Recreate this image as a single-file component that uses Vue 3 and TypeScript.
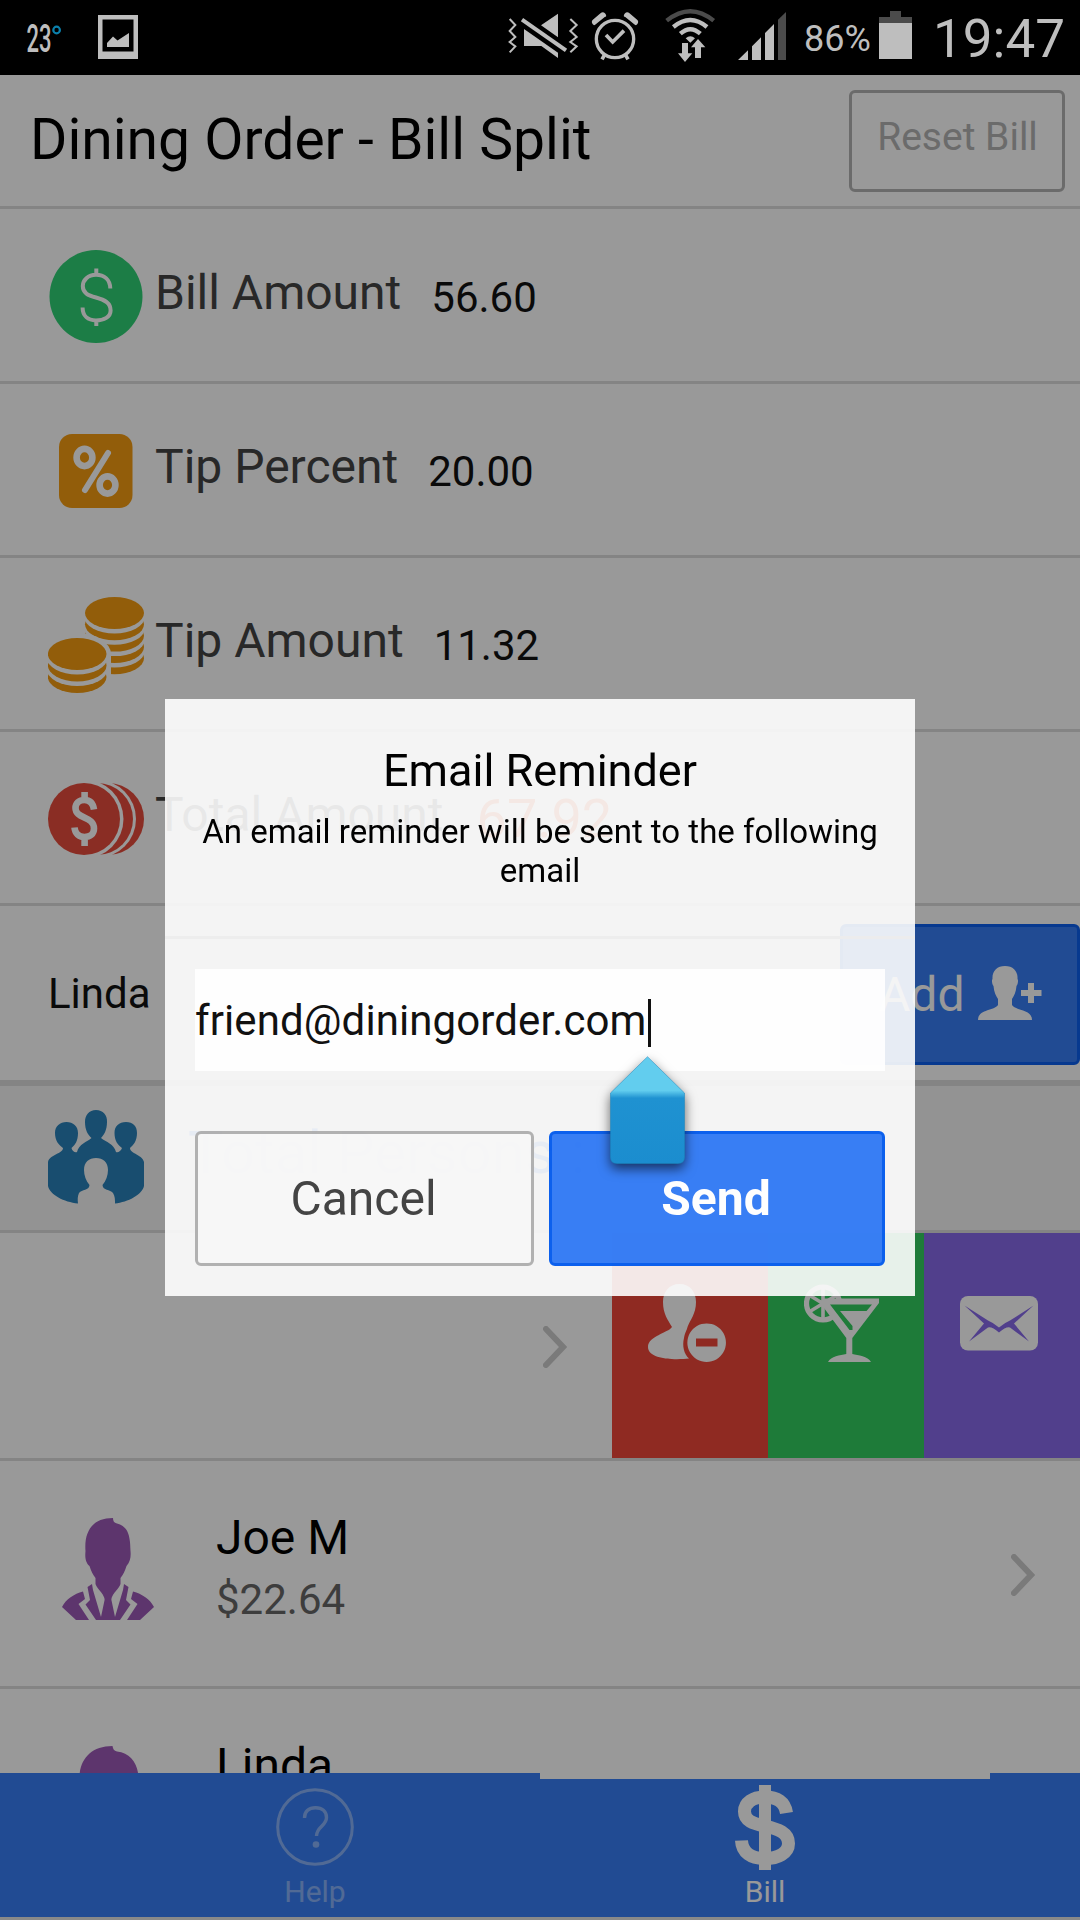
<script setup lang="ts">
import { ref } from 'vue'

interface BillRow {
  icon: 'dollar' | 'percent' | 'coins' | 'total'
  label: string
  value: string
  gap: number
  highlight?: boolean
}

const rows: BillRow[] = [
  { icon: 'dollar', label: 'Bill Amount', value: '56.60', gap: 30 },
  { icon: 'percent', label: 'Tip Percent', value: '20.00', gap: 30 },
  { icon: 'coins', label: 'Tip Amount', value: '11.32', gap: 30 },
  { icon: 'total', label: 'Total Amount', value: '67.92', gap: 33, highlight: true },
]

const personName = ref('Linda')
const email = ref('friend@diningorder.com')
</script>

<template>
  <div class="screen">
    <div class="statusbar">
      <div class="status-left">
        <svg class="weather" width="40" height="75" viewBox="0 0 40 75">
          <text x="0.5" y="52" font-size="38" font-weight="500" textLength="25" lengthAdjust="spacingAndGlyphs" fill="#bebebe">23</text>
          <circle cx="30.6" cy="30" r="3.3" fill="none" stroke="#0b80ac" stroke-width="2.2" />
        </svg>
        <svg class="photo" width="40" height="44" viewBox="0 0 40 44">
          <path fill="#bebebe" fill-rule="evenodd" d="M0 0H40V44H0ZM4.5 4.5V36.5H35.5V4.5Z" />
          <path fill="#bebebe" d="M9 32V28L15 21.5L19.5 25.5L31 18V32Z" />
        </svg>
      </div>
      <svg width="80" height="75" viewBox="15 0 240 225">
        <g fill="none" stroke="#bebebe" stroke-width="6">
          <path d="M29 57L46 75L29 93L46 111L29 126L46 139L29 157" />
          <path d="M211 57L230 75L211 93L230 111L211 126L230 139L211 157" />
        </g>
        <path d="M66 59L198 151" stroke="#bebebe" stroke-width="12" />
        <path fill="#bebebe" d="M174 41V112L123 76ZM72 87V138H124L174 174V158Z" />
      </svg>
      <svg width="70" height="75" viewBox="255 0 210 225">
        <g fill="none" stroke="#bebebe">
          <circle cx="345" cy="117" r="56" stroke-width="10" />
          <path d="M318 105L338 126L372 92" stroke-width="11" />
          <path d="M286 66L308 47M404 66L382 47" stroke-width="20" stroke-linecap="round" />
          <path d="M314 164L306 178M376 164L384 178" stroke-width="11" />
        </g>
        <path d="M278 84L318 52M412 84L372 52" stroke="#000" stroke-width="6" />
      </svg>
      <svg width="70" height="75" viewBox="465 0 210 225">
        <g fill="none">
          <path d="M500 62Q571 5 641 62" stroke="#4b4b4b" stroke-width="13" />
          <path d="M520 81Q571 39 621 81" stroke="#bebebe" stroke-width="13" />
          <path d="M541 101Q571 74 601 101" stroke="#bebebe" stroke-width="13" />
        </g>
        <path fill="#bebebe" d="M557 115Q571 103 585 115L571 128ZM546 129H564V160H577L555 186L534 160H546ZM594 117L616 142H603V174H585V142H573Z" />
      </svg>
      <svg width="65" height="75" viewBox="675 0 195 225">
        <path fill="#bebebe" d="M714 180L744 151V180ZM756 180V139L783 112V180ZM795 180V99L822 72V180Z" />
        <path fill="#4b4b4b" d="M834 180V59L858 36V180Z" />
      </svg>
      <span class="battery-pct">86%</span>
      <svg class="battery" width="33" height="48" viewBox="0 0 33 48">
        <path fill="#4b4b4b" d="M11 0H22V6H33V12H0V6H11Z" />
        <path fill="#bebebe" d="M0 12H33V48H0Z" />
      </svg>
      <span class="clock">19:47</span>
    </div>

    <div class="page">
      <header class="header">
        <h1>Dining Order - Bill Split</h1>
        <button class="reset">Reset Bill</button>
      </header>

      <main class="list">
        <div v-for="row in rows" :key="row.label" class="row">
          <svg v-if="row.icon === 'dollar'" class="icon" viewBox="0 0 96 96">
            <circle cx="48" cy="47.5" r="46.5" fill="#2fd075" />
            <path fill="none" stroke="#fff" stroke-width="4" d="M62.3 39.5C62 30.5 56 25.8 48 25.8C40 25.8 34.8 31 34.8 37C34.8 44 40 46.3 48 48.5C57 51 62.6 54 62.6 61.5C62.6 68 56 71.4 48 71.4C40 71.4 34.6 67 34.6 58.5M48.3 19.5V26M48.3 71V77" />
          </svg>
          <svg v-else-if="row.icon === 'percent'" class="icon" viewBox="0 0 96 96">
            <rect x="11" y="11" width="73.5" height="74" rx="13" fill="#f39c12" />
            <g fill="none" stroke="#fff">
              <ellipse cx="36.5" cy="34.5" rx="7.9" ry="8.6" stroke-width="6.6" />
              <ellipse cx="59.5" cy="62" rx="7.9" ry="8.6" stroke-width="6.6" />
              <path d="M60 30L37 67" stroke-width="6" stroke-linecap="round" />
            </g>
          </svg>
          <svg v-else-if="row.icon === 'coins'" class="icon" viewBox="0 0 96 96">
            <g v-for="k in [4, 3, 2, 1]" :key="'r' + k">
              <ellipse cx="66.5" :cy="16 + 11.3 * k" rx="29.5" ry="16" fill="#f39c12" />
              <ellipse cx="66.5" :cy="16 + 11.3 * k - 6.8" rx="30" ry="16" fill="#fff" />
            </g>
            <ellipse cx="66.5" cy="16" rx="29.5" ry="16" fill="#f39c12" />
            <path fill="#fff" d="M-5 57A34 21 0 0 1 63 57V96H-5Z" />
            <g v-for="k in [2, 1]" :key="'l' + k">
              <ellipse cx="29.2" :cy="57 + 11.5 * k" rx="29.3" ry="16" fill="#f39c12" />
              <ellipse cx="29.2" :cy="57 + 11.5 * k - 7" rx="30" ry="16" fill="#fff" />
            </g>
            <ellipse cx="29.2" cy="57" rx="29.3" ry="16" fill="#f39c12" />
          </svg>
          <svg v-else class="icon" viewBox="0 0 96 96">
            <circle cx="60" cy="48" r="36" fill="#e74c3c" />
            <circle cx="49" cy="48" r="39" fill="#fff" />
            <circle cx="49" cy="48" r="36" fill="#e74c3c" />
            <circle cx="36" cy="48" r="39.5" fill="#fff" />
            <circle cx="36" cy="48" r="36" fill="#e74c3c" />
            <path fill="none" stroke="#fff" stroke-width="6.6" d="M46 38.5C45 32 42 29 36.5 29C31 29 27.5 32 27.5 37C27.5 48 46 45 46 57.5C46 63 42 66 36.5 66C31 66 27 62.5 26.5 56.5M36.6 21V30M36.6 65V75" />
          </svg>
          <span class="label">{{ row.label }}</span>
          <span class="value" :class="{ highlight: row.highlight }" :style="{ marginLeft: row.gap + 'px' }">{{ row.value }}</span>
        </div>

        <div class="row add-row">
          <span class="name-input">{{ personName }}</span>
          <button class="add">
            Add
            <svg width="64" height="54" viewBox="0 0 64 54">
              <path fill="#fff" d="M27 0C35 0 40 5 39.5 13C40.5 14 40 18 38.5 20C38 26 36 30 34 33V39C38 45 54 43 54 54H0C0 43 16 45 20 39V33C18 30 16 26 15.500 20C14 18 13.500 14 14.500 13C14 5 19 0 27 0Z" />
              <path fill="#fff" d="M50 17H56V24H63.500V30H56V37H50V30H43V24H50Z" />
            </svg>
          </button>
        </div>

        <div class="row divider">
          <svg class="icon" viewBox="0 0 96 96">
            <g fill="#2980b9">
              <path d="M48 0C55 0 59.500 5 59 12C59 20 56 25 53 28C58 32 66 34 68 42C70 43 73 41 74 38C70 35 66.500 31 66.500 23C66.500 16 71 12 78 12C85 12 89 16 89 23C89 31 85.500 35 82 38C82 44 94 44 96 52V76C94 85 80 92 67 93.500C67 90 67 86 65 83C62 79 55 81 54.500 75C58 71 60 65 60 60C60 52 55 48 48 48C41 48 36 52 36 60C36 65 38 71 41.500 75C41 81 34 79 31 83C29.500 86 29.500 90 30 93.500C16 92 2 85 0 76V52C2 44 15 44 15 38C11 35 7 31 7 23C7 16 12 12 18.500 12C25 12 30 16 30 23C30 31 27 35 23.500 38C24 41 27 43 29 42C31 34 39 32 43.500 28C40 25 37 20 37 12C37 5 41 0 48 0Z" />
            </g>
          </svg>
          <span class="persons">Total Persons :</span>
        </div>

        <div class="row sliding">
          <div class="slid">
            <svg class="chevron" width="24" height="42" viewBox="0 0 24 42"><path d="M3 3L20 21L3 39" /></svg>
          </div>
          <div class="option remove">
            <svg width="78" height="78" viewBox="0 0 78 78">
              <path fill="#fff" d="M31.500 0C42 0 48 8 48 18C48 30 42 36 39.500 43C39 46 37 48 36 54C34 62 36 70 41 74.500C28 76 0 76 0 63C0 52 20 49 24 43C20 36 15 30 15 18C15 8 21 0 31.500 0Z" />
              <path fill="#fff" fill-rule="evenodd" d="M58.700 39.400A19.300 19.300 0 1 1 58.600 39.400ZM48 54.500V62.500H69.500V54.500Z" />
            </svg>
          </div>
          <div class="option drinks">
            <svg width="78" height="78" viewBox="0 0 78 78">
              <g fill="none" stroke="#fff">
                <circle cx="19" cy="19.500" r="16.500" stroke-width="5.200" />
                <path d="M19 3V36M5 11L33 28M5 28L33 11" stroke-width="3.600" />
              </g>
              <path fill="#fff" d="M20 14.500H75V19L48.300 54V70C54 71.500 64 72 67 78H24C27 72 36 71.500 42.300 70V54L17 20Z" />
              <path fill="#33cd5f" d="M26 20.500H68L62.500 27H36L48.500 42V46H45.500Z" />
            </svg>
          </div>
          <div class="option mail">
            <svg width="78" height="78" viewBox="0 0 78 78">
              <rect x="0" y="12" width="78" height="54.500" rx="8" fill="#fff" />
              <path fill="#886aea" d="M4.500 21.500L28 36.500Q33 38.500 39 43.500Q45 38.500 50 36.500L73.500 21.500L54 39.500L69 57.500L50 43.500Q46 42.500 39 48.500Q32 42.500 28 43.500L9 57.500L24 39.500Z" />
            </svg>
          </div>
        </div>

        <div class="row person">
          <svg class="avatar" width="92" height="102" viewBox="0 0 92 102">
            <g fill="#9b59b6">
              <path d="M51 0C51 3 52 5 55 5.500C64 8 68.500 14 68.500 33C69 38 68.500 44 64.500 48C63 53 61 57 58.500 60V66C57 71 51 74 49 82L46 85L43 82C41 74 35 71 33.500 66V60C31 57 29 53 27.500 48C23 44 23 38 23.500 33C22 14 30 0 51 0Z" />
              <path d="M0 89C4 81 12 76 21 73.500L23 81L16.500 86L27 102H14Z" />
              <path d="M92 89C88 81 80 76 71 73.500L69 81L75.500 86L65 102H78Z" />
              <path d="M30 66L25.500 69L28 82L23.500 86.500L34 102H58L68.500 86.500L64 82L66.500 69L62 66L61 72L53 99L49 80H43L39 99L31 72Z" />
            </g>
          </svg>
          <div class="who">
            <div class="who-name">Joe M</div>
            <div class="who-sum">$22.64</div>
          </div>
          <svg class="chevron" width="24" height="42" viewBox="0 0 24 42"><path d="M3 3L20 21L3 39" /></svg>
        </div>

        <div class="row person">
          <svg class="avatar" width="92" height="102" viewBox="0 0 92 102">
            <path fill="#9b59b6" d="M50.500 0C51 3 52 5 55 5.500C68 7 75 16 76.500 30C77 46 74 58 60 66L92 90V102H0V90L32 66C18 58 16 42 17.500 29C19 12 30 0 50.500 0Z" />
          </svg>
          <div class="who">
            <div class="who-name">Linda</div>
          </div>
        </div>
      </main>

      <nav class="tabs">
        <div class="tab help">
          <svg width="78" height="78" viewBox="0 0 78 78" fill="none" stroke="#fff">
            <circle cx="39" cy="39" r="37.300" stroke-width="3" />
            <path stroke-width="3.400" d="M28.500 30C28.500 23 33 19.800 39.500 19.800C46 19.800 50.500 23.500 50.500 29.500C50.500 38 40.500 38.500 40.500 48" />
            <circle cx="40" cy="56.500" r="3.300" fill="#fff" stroke="none" />
          </svg>
          <span>Help</span>
        </div>
        <div class="tab active">
          <svg width="78" height="86" viewBox="0 0 78 86" fill="none" stroke="#fff">
            <path stroke-width="12" d="M39 0V85" />
            <path stroke-width="13" d="M60.500 28C59 17 51 12 39 12C27 12 18.500 17.500 18.500 26.500C18.500 36 27 38.500 39 41C52 44 62.500 47.500 62.500 58.500C62.500 68 52 73.500 39 73.500C25 73.500 16 67.500 15.500 55.500" />
          </svg>
          <span>Bill</span>
        </div>
      </nav>

      <div class="overlay">
        <section class="popup">
          <div class="popup-head">
            <h3>Email Reminder</h3>
            <h5>An email reminder will be sent to the following email</h5>
          </div>
          <div class="popup-body">
            <div class="field">
              <span>{{ email }}</span><i class="caret"></i>
              <svg class="handle" width="75" height="108" viewBox="0 0 75 108">
                <defs>
                  <linearGradient id="grip" x1="0" y1="0" x2="0" y2="108" gradientUnits="userSpaceOnUse">
                    <stop offset="0.32" stop-color="#62ceef" />
                    <stop offset="0.39" stop-color="#1f93d2" />
                    <stop offset="1" stop-color="#1b8ed0" />
                  </linearGradient>
                </defs>
                <path fill="url(#grip)" stroke="#1a86bd" stroke-opacity="0.5" d="M37.500 0.700L74.500 37V101Q74.500 107.500 68 107.500H7Q0.500 107.500 0.500 101V37Z" />
              </svg>
            </div>
          </div>
          <div class="popup-buttons">
            <button class="cancel">Cancel</button>
            <button class="send">Send</button>
          </div>
        </section>
      </div>
    </div>
  </div>
</template>

<style>
body {
  margin: 0;
}
</style>

<style scoped>
* {
  box-sizing: border-box;
}
.screen {
  width: 1080px;
  height: 1920px;
  overflow: hidden;
  background: #fff;
  font-family: Roboto, 'Liberation Sans', sans-serif;
  color: #000;
}
svg {
  display: block;
  flex: none;
}
button {
  margin: 0;
  padding: 0;
  font-family: inherit;
  font-weight: 400;
  border: 3px solid;
  border-radius: 6px;
}
.statusbar {
  display: flex;
  height: 75px;
  background: #000;
  color: #bebebe;
}
.status-left {
  display: flex;
  width: 505px;
  padding-left: 26px;
}
.weather {
  overflow: visible;
}
.photo {
  margin: 15px 0 0 32px;
}
.battery-pct {
  width: 89px;
  padding-left: 14px;
  font-size: 36px;
  line-height: 78px;
  white-space: nowrap;
}
.battery {
  margin-top: 11px;
}
.clock {
  margin-left: 21px;
  font-size: 53px;
  line-height: 79px;
}
.page {
  position: relative;
  display: flex;
  flex-direction: column;
  height: 1845px;
}
.header {
  display: flex;
  justify-content: space-between;
  flex: none;
  height: 134px;
  padding: 0 15px 0 30px;
  border-bottom: 3px solid #ddd;
}
h1 {
  margin: 0;
  font-size: 57px;
  font-weight: 400;
  line-height: 129px;
}
.reset {
  width: 216px;
  height: 102px;
  margin-top: 15px;
  padding: 0 0 7px 1px;
  border-color: #b2b2b2;
  background: transparent;
  color: #b2b2b2;
  font-size: 39px;
  line-height: 87px;
}
.list {
  flex: 1;
  min-height: 0;
  margin-top: 1px;
  overflow: hidden;
}
.row {
  display: flex;
  align-items: flex-start;
  height: 174px;
  border-bottom: 3px solid #ddd;
}
.icon {
  width: 96px;
  height: 96px;
  margin: 39px 12px 0 48px;
}
.label {
  margin-left: -1px;
  color: #444;
  font-size: 48px;
  line-height: 166px;
}
.value {
  color: #111;
  font-size: 42px;
  line-height: 175px;
}
.value.highlight {
  color: #ff4500;
  font-size: 54px;
  line-height: 173px;
}
.add-row {
  justify-content: space-between;
  height: 180px;
  padding-left: 48px;
  border-bottom-width: 6px;
}
.name-input {
  color: #111;
  font-size: 42px;
  line-height: 175px;
}
.add {
  display: flex;
  width: 240px;
  height: 141px;
  margin-top: 18px;
  padding-left: 36px;
  border-color: #0c60ee;
  background: #387ef5;
  color: #fff;
  font-size: 48px;
  line-height: 135px;
}
.add svg {
  margin: 39px 0 0 14px;
}
.divider {
  height: 147px;
  background: #f5f5f5;
}
.divider .icon {
  margin-top: 24px;
}
.persons {
  margin-left: 32px;
  color: #387ef5;
  font-size: 60px;
  line-height: 133px;
}
.sliding,
.person {
  height: 228px;
}
.slid {
  display: flex;
  justify-content: flex-end;
  width: 612px;
  padding-right: 45px;
}
.chevron {
  margin-top: 93px;
  fill: none;
  stroke: #ccc;
  stroke-width: 6px;
  stroke-linecap: round;
}
.option {
  width: 156px;
  height: 225px;
  padding: 51px 0 0 36px;
}
.remove {
  background: #ef473a;
}
.drinks {
  background: #33cd5f;
}
.mail {
  background: #886aea;
}
.avatar {
  margin: 57px 0 0 62px;
}
.who {
  flex: 1;
  padding: 47px 0 0 62px;
}
.who-name {
  font-size: 48px;
  line-height: 60px;
}
.who-sum {
  margin-top: 2px;
  color: #666;
  font-size: 42px;
  line-height: 60px;
}
.person .chevron {
  margin-right: 45px;
}
.tabs {
  display: flex;
  flex: none;
  height: 147px;
  padding: 0 90px;
  border-bottom: 3px solid #e4e4e4;
  background: #387ef5;
  color: #fff;
  font-size: 30px;
  line-height: 36px;
}
.tab {
  display: flex;
  flex: 1;
  flex-direction: column;
  align-items: center;
  justify-content: flex-end;
  padding-bottom: 7px;
}
.tab.active {
  border-top: 6px solid #fff;
}
.tab.help svg,
.tab.help span {
  opacity: 0.4;
}
.tab svg {
  margin-bottom: 8px;
}
.tab.active svg {
  margin-bottom: 3px;
}
.overlay {
  position: absolute;
  inset: 0;
  display: flex;
  align-items: center;
  justify-content: center;
  background: rgba(0, 0, 0, 0.4);
}
.popup {
  width: 750px;
  height: 597px;
  background: rgba(255, 255, 255, 0.9);
  opacity: 0.993;
}
.popup-head {
  height: 240px;
  padding: 42px 30px 0;
  border-bottom: 3px solid #eee;
  text-align: center;
}
h3 {
  margin: 0;
  font-size: 45px;
  font-weight: 400;
  line-height: 60px;
}
h5 {
  margin: 11px 0 0;
  font-size: 33px;
  font-weight: 400;
  line-height: 39px;
}
.popup-body {
  padding: 30px;
}
.field {
  position: relative;
  z-index: 1;
  display: flex;
  align-items: center;
  height: 102px;
  color: #111;
  font-size: 42px;
  letter-spacing: 0.1px;
}
.field::before {
  content: '';
  position: absolute;
  inset: 0;
  z-index: -1;
  background: #fff;
}
.caret {
  width: 3px;
  height: 48px;
  margin: 6px 0 0 1px;
  background: #111;
}
.handle {
  position: absolute;
  top: 87px;
  left: 415px;
  overflow: visible;
  filter: drop-shadow(0 5px 6px rgba(0, 0, 0, 0.6));
}
.popup-buttons {
  display: flex;
  gap: 15px;
  padding: 30px 30px 0;
}
.popup-buttons button {
  height: 135px;
  padding-right: 2px;
  font-size: 48px;
  line-height: 129px;
}
.cancel {
  width: 339px;
  border-color: #b2b2b2;
  background: #f8f8f8;
  color: #444;
}
.popup-buttons .send {
  width: 336px;
  border-color: #0c60ee;
  background: #387ef5;
  color: #fff;
  font-weight: 700;
}
</style>
